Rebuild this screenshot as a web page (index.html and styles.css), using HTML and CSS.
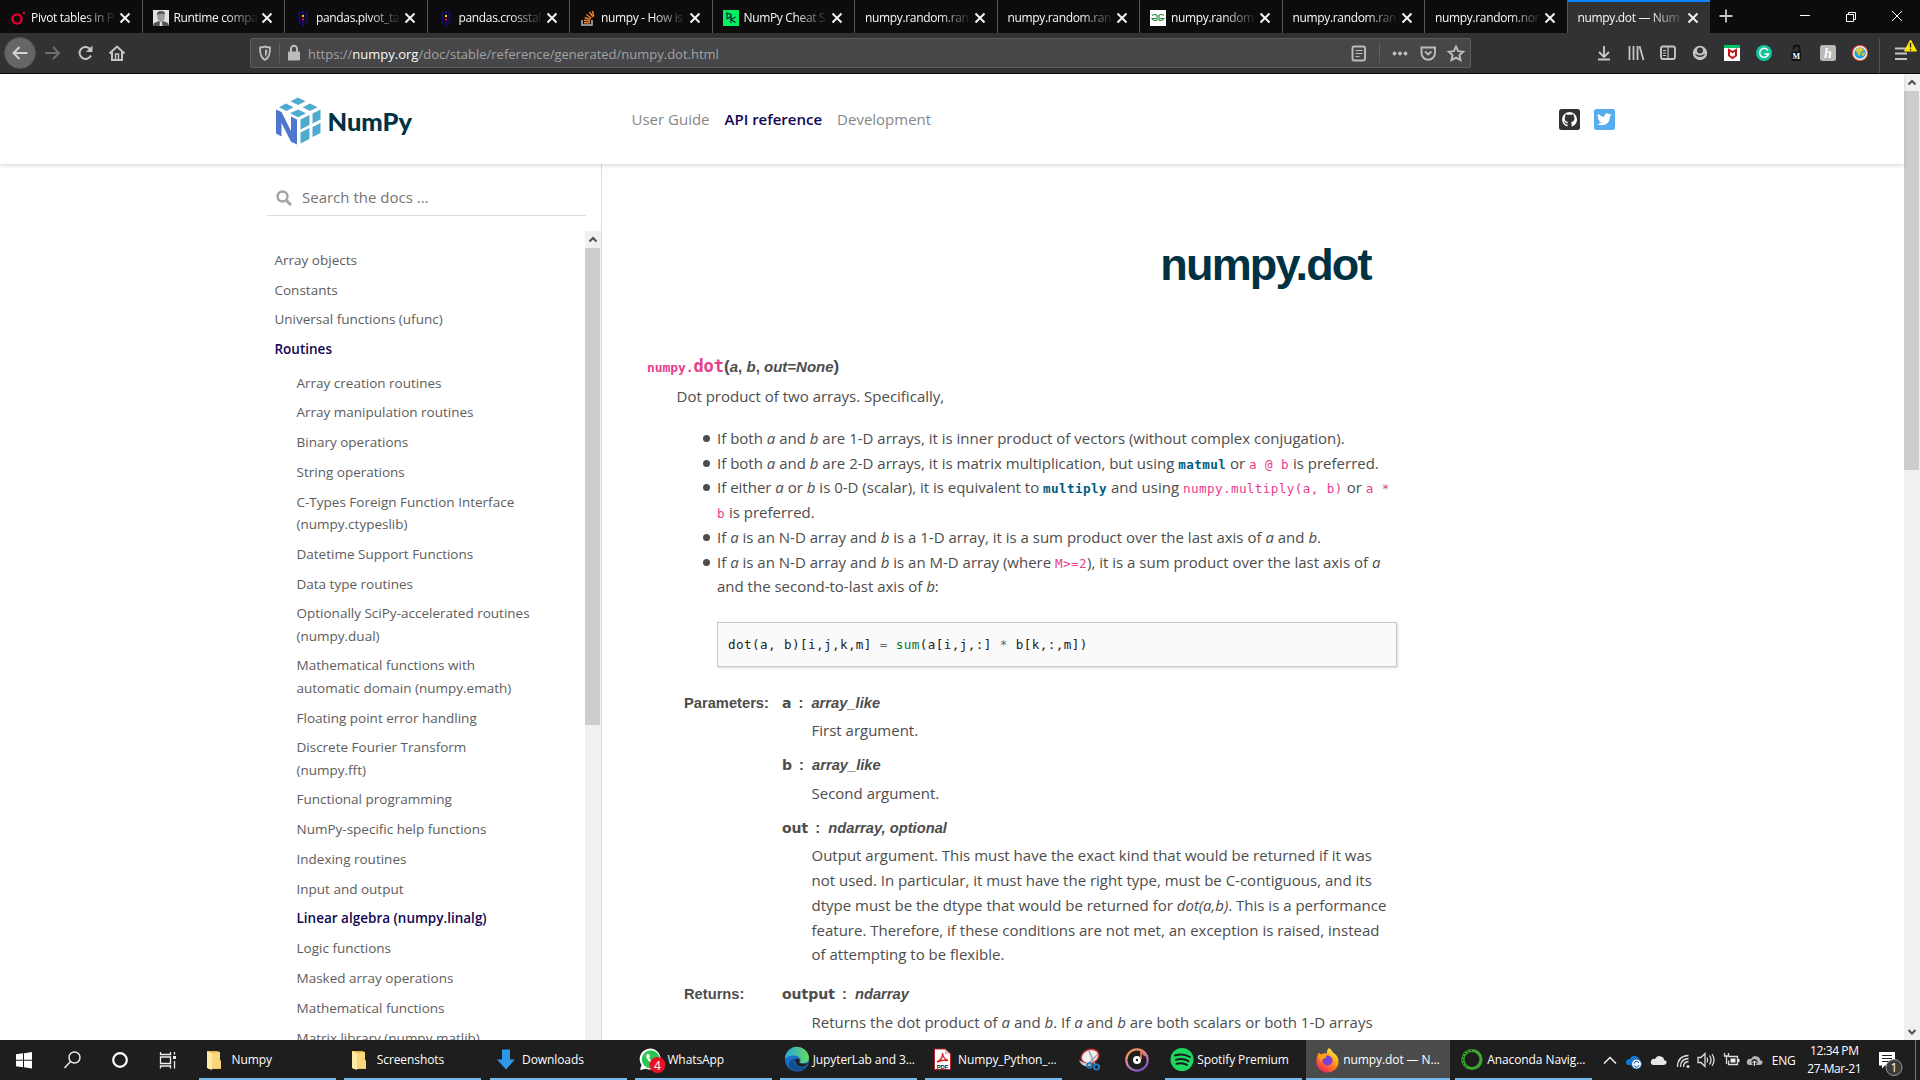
FILE: index.html
```html
<!DOCTYPE html>
<html lang="en">
<head>
<meta charset="utf-8">
<title>numpy.dot — NumPy Manual</title>
<link rel="stylesheet" href="styles.css">
</head>
<body>
<svg class="defs" aria-hidden="true">
  <symbol id="x" viewBox="0 0 12 12"><path d="M1.500 1.500l9 9m0-9l-9 9" fill="none" stroke="#f4f4f5" stroke-width="2"/></symbol>
  <symbol id="pandas" viewBox="0 0 16 16"><path d="M4.500 2v12M11.500 1v12M8 1v3.500M8 11.500V16" stroke="#1c0a6b" stroke-width="2"/><path d="M7 5h2v2H7z" fill="#ffca00"/><path d="M7 8.500h2v2H7z" fill="#e70488"/></symbol>
  <symbol id="folder" viewBox="0 0 16 20"><path d="M1 1h10l3 1v8l1 1v8H2z" fill="#e8b84a"/><path d="M1 1l5 2v17l-5-2z" fill="#ffe9a6"/><path d="M6 3l8-1v8l1 1v7l-9 1z" fill="#f9d679"/></symbol>
</svg>
<div class="screen">
  <div class="tabs">
    <div class="tab"><svg class="fav" viewBox="0 0 16 16"><circle cx="7" cy="9" r="4.600" fill="none" stroke="#e4002b" stroke-width="2.400"/><circle cx="14" cy="3" r="1.300" fill="#e4002b"/></svg><span class="tt">Pivot tables in P</span><svg class="x"><use href="#x"/></svg></div>
    <div class="tab"><svg class="fav" viewBox="0 0 16 16"><path fill="#e2e2e2" d="M0 0h16v16H0z"/><path d="M4 5q0-4 4-4t4 4l-.5 4L8 13 4.500 9z" fill="#9b9b9b"/><path d="M4 5q0-4 4-4t4 3q-4-1-8 1z" fill="#555"/><path d="M0 16l1-3 5-2 2 2 2-2 5 2 1 3z" fill="#555"/><path d="M7 12h2l.5 4h-3z" fill="#ddd"/></svg><span class="tt">Runtime compa</span><svg class="x"><use href="#x"/></svg></div>
    <div class="tab"><svg class="fav"><use href="#pandas"/></svg><span class="tt">pandas.pivot_ta</span><svg class="x"><use href="#x"/></svg></div>
    <div class="tab"><svg class="fav"><use href="#pandas"/></svg><span class="tt">pandas.crosstal</span><svg class="x"><use href="#x"/></svg></div>
    <div class="tab"><svg class="fav" viewBox="0 0 16 16"><path d="M2 10v5h10v-5" fill="none" stroke="#bcbbbb" stroke-width="1.500"/><path d="M4 12.700h6M4 10.200l6 .8M4.700 7.500l5.700 2M6.400 4.500l5 3.700M9.500 2l3.500 5M12.500.8l1.200 5.500" stroke="#f48024" stroke-width="1.400"/></svg><span class="tt">numpy - How is</span><svg class="x"><use href="#x"/></svg></div>
    <div class="tab"><svg class="fav" viewBox="0 0 16 16"><path fill="#03ef62" d="M0 0h16v16H0z"/><path d="M4 9V3l4 1.500v2L4 9M8 6.500V13M12.500 7L8 9.500l4.500 3" fill="none" stroke="#05192d" stroke-width="1.100"/></svg><span class="tt">NumPy Cheat S</span><svg class="x"><use href="#x"/></svg></div>
    <div class="tab"><span class="tt">numpy.random.ran</span><svg class="x"><use href="#x"/></svg></div>
    <div class="tab"><span class="tt">numpy.random.ran</span><svg class="x"><use href="#x"/></svg></div>
    <div class="tab"><svg class="fav" viewBox="0 0 16 16"><path fill="#fff" d="M0 0h16v16H0z"/><path d="M2 5.500q3-2 5 0v4.500q-3 1.500-5-1.500h4M14 5.500q-3-2-5 0v4.500q3 1.500 5-1.500h-4" fill="none" stroke="#2f8d46" stroke-width="1.200"/></svg><span class="tt">numpy.random</span><svg class="x"><use href="#x"/></svg></div>
    <div class="tab"><span class="tt">numpy.random.ran</span><svg class="x"><use href="#x"/></svg></div>
    <div class="tab"><span class="tt">numpy.random.nor</span><svg class="x"><use href="#x"/></svg></div>
    <div class="tab active"><span class="tt">numpy.dot — Num</span><svg class="x"><use href="#x"/></svg></div>
    <svg class="winbtns" viewBox="0 0 211 33"><path d="M10.500 16h13M17 9.500v13" stroke="#c8c8ca" stroke-width="1.800"/><path d="M91 15.500h10" stroke="#fff"/><path d="M137.500 14.500h7v7h-7zM139.500 14.500v-2h7v7h-2" fill="none" stroke="#fff"/><path d="M183 11l10 10m0-10l-10 10" stroke="#fff"/></svg>
  </div>
  <div class="toolbar">
    <svg class="navbtns" viewBox="0 0 250 40"><circle cx="20" cy="20" r="15.500" fill="#666668" stroke="#515153"/><path d="M27.500 20h-14m6-6l-6 6 6 6" fill="none" stroke="#d2d2d3" stroke-width="2"/><path d="M45 20h14m-6-6l6 6-6 6" fill="none" stroke="#6f6f71" stroke-width="2"/><path d="M90.500 16.500a6 6 0 1 0 .5 6" fill="none" stroke="#c4c4c5" stroke-width="2"/><path d="M92.500 12.500v6.500H86z" fill="#c4c4c5"/><path d="M109.500 20.500l7.500-7 7.500 7M112 19v8h10v-8" fill="none" stroke="#c4c4c5" stroke-width="2"/><path d="M115.500 27v-6h3v6" fill="none" stroke="#c4c4c5" stroke-width="1.500"/></svg>
    <div class="url">
      <svg class="shield" viewBox="0 0 50 28"><path d="M9 8.500q4.500-.5 5-1 .5.500 5 1c.2 6-.5 10-5 12.500-4.500-2.500-5.200-6.500-5-12.500z" fill="none" stroke="#bcbcbd" stroke-width="1.800"/><path d="M14 10.500v7.500c1.800-1.500 2.300-4 2.300-7z" fill="#bcbcbd"/><path d="M28.500 4v20" stroke="#5f5f61"/><rect x="37" y="12.500" width="12" height="9" rx="1" fill="#bcbcbd"/><path d="M40 13v-3a3 3.200 0 0 1 6 0v3" fill="none" stroke="#bcbcbd" stroke-width="2"/></svg>
      <span class="addr">https://<b>numpy.org</b>/doc/stable/reference/generated/numpy.dot.html</span>
      <svg class="urlicons" viewBox="0 0 122 28"><g fill="none" stroke="#bcbcbd" stroke-width="1.900"><rect x="4.500" y="7.500" width="12.500" height="14" rx="1.500"/><path d="M7.500 11.500h7M7.500 14.500h7M7.500 17.500h4" stroke-width="1.200"/><path d="M73.500 8.500h13.500v5.500a6.700 6.700 0 0 1-13.500 0z"/><path d="M77 12.500l3.200 3 3.200-3"/><path d="M108 7.500l2.200 4.600 5 .6-3.700 3.500 1 5-4.500-2.500-4.500 2.500 1-5-3.700-3.500 5-.6z"/></g><path d="M31.500 4v20" stroke="#5f5f61"/><circle cx="46.500" cy="14.500" r="1.900" fill="#bcbcbd"/><circle cx="52" cy="14.500" r="1.900" fill="#bcbcbd"/><circle cx="57.500" cy="14.500" r="1.900" fill="#bcbcbd"/></svg>
    </div>
    <svg class="exts" viewBox="0 0 340 40"><g fill="none" stroke="#c4c4c5" stroke-width="1.900"><path d="M24 13v11m-5-5l5 5 5-5M18 26.500h12"/><path d="M49.500 13v14M53.500 13v14M57.500 13v14M59.500 13l4 14" stroke-width="1.800"/><rect x="81" y="13.500" width="14" height="12.500" rx="2"/><path d="M88 14v12M83 17.500h3M83 20h3M83 22.500h3" stroke-width="1.200"/></g>
      <circle cx="120" cy="20" r="7.200" fill="#c4c4c5"/><circle cx="120" cy="17.500" r="3" fill="#38383a"/><path d="M115 20.500q5 4 10 0-1 3.500-5 3.500t-5-3.500z" fill="#38383a"/>
      <path fill="#fff" d="M144 12h16v16h-16z"/><path fill="#02c66c" d="M144 12h16v3h-16z"/><path d="M149 17v5.500l3.500 2.500 3.500-2.500V17l-3.500 2z" fill="none" stroke="#c01818" stroke-width="2"/>
      <circle cx="184" cy="20" r="8" fill="#15c39a"/><path d="M188 17.500a4.500 4.500 0 1 0 .5 3.500h-4" fill="none" stroke="#fff" stroke-width="1.500"/>
      <path d="M213.500 16.500v-1.500q0-2.500 3-2.500t3 2.500v4" fill="none" stroke="#111" stroke-width="1.800"/><path fill="#101010" d="M211.500 18.500h9.500V28h-9.500z"/><text x="216.200" y="26.200" class="mk">M</text>
      <rect x="240" y="12" width="16" height="16" rx="2.500" fill="#b9b9ba"/><text x="248" y="25" class="honey">h</text>
      <circle cx="280" cy="20" r="8" fill="#f05a38"/><circle cx="280" cy="20" r="7" fill="#fff"/><circle cx="280" cy="20" r="5.800" fill="#1fa3dc"/><path d="M275 18q2-4 6-3.500l3 2.500-3 2-1 4-2-1-1-3zM282 20l3-1-1 3.500-2 1z" fill="#d8c83d"/>
      <path d="M299.500 6v34" stroke="#55555a"/><path d="M315 15.500h12M315 20.500h12M315 26h12" stroke="#c4c4c5" stroke-width="2"/><path d="M330.500 7l6 11h-12z" fill="#ffe900" stroke="#ffe900" stroke-linejoin="round"/><path d="M330.500 10v4.500m0 1.500v1.500" stroke="#222" stroke-width="1.300"/></svg>
  </div>

  <div class="page">
    <div class="view">
      <header class="head">
        <svg class="logo" viewBox="0 0 140 50"><g fill="#4dabcf"><path d="M23 1.500l7.500 3.700L23 9l-7.500-3.800zM11 7.500l7.500 3.700-7 3.800L4 11.200zM35 7.500l7.500 3.700-7.500 3.800-7.300-3.800zM23 13.500l8 3.800-8 4-8-4z"/><path d="M25.500 23.500l9-4.500v10l-9 4.500zM37.500 17.500l8-4v10l-8 4zM25.500 36.500l9-4.500v11l-9 4.500zM37.500 31l8-4v10l-8 4z"/></g><path d="M1 13.500l5.500 2.600 9.500 19V20.500l6 3v25l-6-2.700L6.500 27v13.500L1 37.500z" fill="#4d77cf"/><text x="52.500" y="34.800" class="brand" textLength="84.500" lengthAdjust="spacingAndGlyphs">NumPy</text></svg>
        <nav><a>User Guide</a><a class="on">API reference</a><a>Development</a></nav>
        <svg class="social" viewBox="0 0 56 22"><rect width="21" height="21" rx="2.500" fill="#333"/><path d="M10.500 3a7.500 7.500 0 0 0-2.600 14.500c.5.100.6-.2.600-.5v-1.700c-2 .4-2.700-.8-2.900-1.500-.2-.4-.6-.9-1-1.100.8-.5 1.400.3 1.800.9.600.9 1.500.8 2.200.5.100-.5.300-.9.600-1.100-1.900-.2-3.500-.9-3.500-3.700 0-.9.300-1.600.8-2.100-.1-.4-.3-1.100.1-2 1 0 1.700.5 2.200.8 1.100-.3 2.500-.3 3.600 0 .5-.3 1.200-.8 2.200-.8.400.9.200 1.600.1 2 .5.500.8 1.200.8 2.100 0 2.800-1.700 3.500-3.500 3.700.4.300.6.800.6 1.600V17c0 .3.200.6.600.5A7.500 7.500 0 0 0 10.500 3z" fill="#fff"/><rect x="35" width="21" height="21" rx="2.500" fill="#55acee"/><path d="M52.500 5.500l-1.700.5q1-.6 1.300-1.500l-1.800.7a3 3 0 0 0-5 2.700q-3.700-.2-6.300-3.100-1.200 2.500 1 4.200l-1.400-.4q.1 2.400 2.400 3h-1.300q.8 2 2.800 2-1.900 1.500-4.500 1.300c5.500 3.300 13 .8 13-7.600q1-.8 1.500-1.800z" fill="#fff"/></svg>
      </header>
      <div class="cols">
        <aside>
          <div class="search"><svg viewBox="0 0 16 16"><circle cx="6.500" cy="6.500" r="5" fill="none" stroke="#a5a5a5" stroke-width="2.400"/><path d="M10 10l5 5" stroke="#a5a5a5" stroke-width="3"/></svg><span>Search the docs ...</span></div>
          <div class="sidescroll">
            <ul class="menu">
              <li>Array objects</li><li>Constants</li><li>Universal functions (ufunc)</li><li class="on">Routines</li>
            </ul>
            <ul class="menu sub">
              <li>Array creation routines</li><li>Array manipulation routines</li><li>Binary operations</li><li>String operations</li><li>C-Types Foreign Function Interface<br>(numpy.ctypeslib)</li><li>Datetime Support Functions</li><li>Data type routines</li><li>Optionally SciPy-accelerated routines<br>(numpy.dual)</li><li>Mathematical functions with<br>automatic domain (numpy.emath)</li><li>Floating point error handling</li><li>Discrete Fourier Transform<br>(numpy.fft)</li><li>Functional programming</li><li>NumPy-specific help functions</li><li>Indexing routines</li><li>Input and output</li><li class="on">Linear algebra (numpy.linalg)</li><li>Logic functions</li><li>Masked array operations</li><li>Mathematical functions</li><li>Matrix library (numpy.matlib)</li>
            </ul>
            <div class="bar side"><svg viewBox="0 0 16 17"><path d="M4.500 10.500L8 7l3.500 3.500" fill="none" stroke="#505050" stroke-width="2"/></svg><i></i></div>
          </div>
        </aside>
        <main>
          <h1>numpy.dot</h1>
          <div class="sig"><code>numpy.</code><code class="fn">dot</code><b class="par">(</b><em>a</em>, <em>b</em>, <em>out=None</em><b class="par">)</b></div>
          <p class="lead">Dot product of two arrays. Specifically,</p>
          <ul class="pts">
            <li>If both <i>a</i> and <i>b</i> are 1-D arrays, it is inner product of vectors (without complex conjugation).</li>
            <li>If both <i>a</i> and <i>b</i> are 2-D arrays, it is matrix multiplication, but using <code class="ref">matmul</code> or <code>a @ b</code> is preferred.</li>
            <li>If either <i>a</i> or <i>b</i> is 0-D (scalar), it is equivalent to <code class="ref">multiply</code> and using <code>numpy.multiply(a, b)</code> or <code>a *<br>b</code> is preferred.</li>
            <li>If <i>a</i> is an N-D array and <i>b</i> is a 1-D array, it is a sum product over the last axis of <i>a</i> and <i>b</i>.</li>
            <li>If <i>a</i> is an N-D array and <i>b</i> is an M-D array (where <code>M&gt;=2</code>), it is a sum product over the last axis of <i>a</i><br>and the second-to-last axis of <i>b</i>:</li>
          </ul>
          <pre>dot(a, b)[i,j,k,m] <s>=</s> <u>sum</u>(a[i,j,:] <s>*</s> b[k,:,m])</pre>
          <dl class="fields">
            <dt>Parameters:</dt>
            <dd>
              <div class="arg"><b>a</b><span>:</span><em>array_like</em></div><p>First argument.</p>
              <div class="arg"><b>b</b><span>:</span><em>array_like</em></div><p>Second argument.</p>
              <div class="arg"><b>out</b><span>:</span><em>ndarray, optional</em></div>
              <p>Output argument. This must have the exact kind that would be returned if it was<br>not used. In particular, it must have the right type, must be C-contiguous, and its<br>dtype must be the dtype that would be returned for <i>dot(a,b)</i>. This is a performance<br>feature. Therefore, if these conditions are not met, an exception is raised, instead<br>of attempting to be flexible.</p>
            </dd>
            <dt>Returns:</dt>
            <dd><div class="arg"><b>output</b><span>:</span><em>ndarray</em></div><p>Returns the dot product of <i>a</i> and <i>b</i>. If <i>a</i> and <i>b</i> are both scalars or both 1-D arrays</p></dd>
          </dl>
        </main>
      </div>
    </div>
    <div class="bar main"><svg viewBox="0 0 16 17"><path d="M4.500 10.500L8 7l3.500 3.500" fill="none" stroke="#505050" stroke-width="2"/></svg><i></i><svg class="down" viewBox="0 0 16 17"><path d="M4.500 7L8 10.500 11.500 7" fill="none" stroke="#505050" stroke-width="2"/></svg></div>
  </div>

  <div class="taskbar">
    <svg class="sys" viewBox="0 0 199 40"><path d="M16 14.300l7-1v6.500h-7zM24 13.200l8-1.200v7.800h-8zM16 20.700h7v6.500l-7-1zM24 20.700h8v7.800l-8-1.200z" fill="#fff"/><circle cx="74.500" cy="17.500" r="5.500" fill="none" stroke="#eee" stroke-width="1.400"/><path d="M70.500 21.500L64.500 28" stroke="#eee" stroke-width="1.400"/><circle cx="120" cy="20" r="6.800" fill="none" stroke="#fff" stroke-width="2.200"/><path d="M160.500 12v2.500h10V12M160.500 28.500V26h10v2.500M160.500 17h10v6.500h-10zM174.500 12v2.500m0 6.500v7.500" fill="none" stroke="#eee" stroke-width="1.300"/><path d="M173 16h3v3h-3z" fill="#eee"/></svg>
    <div class="app"><svg><use href="#folder" x="7" y="10" width="16" height="20"/></svg><span>Numpy</span></div>
    <div class="app"><svg><use href="#folder" x="7" y="10" width="16" height="20"/></svg><span>Screenshots</span></div>
    <div class="app"><svg viewBox="0 0 32 40"><path d="M12 9.500h8v10h5L16 29.500 7 19.500h5z" fill="#2f97e8"/></svg><span>Downloads</span></div>
    <div class="app"><svg viewBox="0 0 32 40"><path d="M5 30l1.500-5a10.500 10.500 0 1 1 4.500 3.700z" fill="#fff"/><circle cx="15.800" cy="19.300" r="9" fill="#2bc754"/><path d="M12 14c-3 3 3.500 11 8 9.500l1-2.500-2.500-1.500-1.500 1.200q-2-1-3-3l1-1.200-1-2.500z" fill="#fff"/><circle cx="22.500" cy="25" r="8" fill="#e81224"/><text x="22.500" y="29.500" class="badge">4</text></svg><span>WhatsApp</span></div>
    <div class="app"><svg viewBox="0 0 32 40"><defs><linearGradient id="e1" x1="0" x2="1"><stop stop-color="#2aa7e0"/><stop offset="1" stop-color="#65d95c"/></linearGradient></defs><circle cx="17" cy="19.500" r="12" fill="#1b70c8"/><path d="M5 19.500a12 12 0 0 1 24-1.500c.2 5-6 6.500-9.500 4.500 3-3-.5-7-5-7Q7 15.500 5 19.500z" fill="url(#e1)"/><path d="M15 19c-2 6 3.500 9 11.500 7-5 6-14 7-18 0 0-4 2.500-7 6.500-7z" fill="#154d91"/><path d="M15 19.500q3-2 4.500.5.500 1-.5 2.500 3 2.200 9 .5-1.500 3-4 3.300-8 1-9-6.800z" fill="#1e1e1e"/></svg><span>JupyterLab and 3...</span></div>
    <div class="app"><svg viewBox="0 0 32 40"><path d="M9.500 9H20l5.500 5v15.500h-16z" fill="#fff" stroke="#b8202a"/><path d="M20 9l5.500 5H20z" fill="#f2b4b4"/><path d="M12 22q6-3 5.500-9 .8 6 5.500 7.500-6-1-11 1.500z" fill="none" stroke="#dd2025" stroke-width="1.400"/><text x="17.500" y="28.500" class="pdf">PDF</text></svg><span>Numpy_Python_...</span></div>
    <svg class="mid" viewBox="0 0 94 40"><ellipse cx="19" cy="16.500" rx="9" ry="7" transform="rotate(-20 19 16.500)" fill="#eef0f3" stroke="#c93030" stroke-width="1.500"/><path d="M8 20q3 8 11 6l3-2q-9 0-14-4z" fill="#c8ccd2"/><path d="M18 11l6 14M27 14l-10 10" stroke="#9aa3ad" stroke-width="1.500"/><circle cx="25.500" cy="27" r="2.600" fill="none" stroke="#1e7fc2" stroke-width="1.800"/><circle cx="18.500" cy="25.500" r="2.300" fill="none" stroke="#1e7fc2" stroke-width="1.800"/><defs><linearGradient id="g1" x1="0" y1="0" x2=".6" y2="1"><stop stop-color="#f5963a"/><stop offset=".5" stop-color="#dc87a0"/><stop offset="1" stop-color="#8257c2"/></linearGradient></defs><circle cx="66" cy="20" r="10.700" fill="none" stroke="url(#g1)" stroke-width="2.200"/><circle cx="66" cy="20" r="4" fill="#fff"/><circle cx="66" cy="20" r="1.200" fill="#222"/><path d="M70 19v-8l4 5" fill="none" stroke="#e8775a" stroke-width="1.700"/></svg>
    <div class="app spot"><svg viewBox="0 0 32 40"><circle cx="17" cy="19.500" r="11.500" fill="#1ed760"/><path d="M10 15.500q8-2.500 15 1.500M11 19.800q7-2 12.500 1.300M11.500 23.700q6-1.500 10.500 1.200" fill="none" stroke="#1b1b1b" stroke-width="2" stroke-linecap="round"/></svg><span>Spotify Premium</span></div>
    <div class="app cur"><svg viewBox="0 0 32 40"><defs><linearGradient id="f1" x1=".8" y1="0" x2=".2" y2="1"><stop stop-color="#fff04a"/><stop offset=".45" stop-color="#ff980e"/><stop offset="1" stop-color="#f0195f"/></linearGradient></defs><path d="M18 8q3 2 4 4.500 6 4 5.500 9.500a11 10.500 0 0 1-22 0Q5 16.500 8 12.500l2 2q3-2 6-1-.5-3.500 2-5.500z" fill="url(#f1)"/><circle cx="16.500" cy="20.500" r="5" fill="#7a3fe0"/><path d="M8 14q4 1 7 2.500 1.500 1-1.500 2-3 0-2.500 3-4-1-3-7.500z" fill="#ff9f16"/></svg><span>numpy.dot — N...</span></div>
    <div class="app ana"><svg viewBox="0 0 32 40"><circle cx="17" cy="19.500" r="9" fill="none" stroke="#3aa62c" stroke-width="3.200"/><path d="M17 10.300a9.200 9.200 0 0 0-6 16.200" fill="none" stroke="#1e1e1e" stroke-width="1.200" stroke-dasharray="1.500 2"/></svg><span>Anaconda Navig...</span></div>
    <svg class="tray" viewBox="0 0 177 40"><path d="M13 23.500l6-6 6 6" fill="none" stroke="#eee" stroke-width="1.500"/><path d="M37 25q-2.500-.5-2-3.500t4-2.500q2-4 6-3 3 1 3.500 4l2 5z" fill="#0f78d4"/><circle cx="45.500" cy="24" r="5" fill="#eef3fa" stroke="#1862a8"/><path d="M43 23.500a2.600 2.600 0 0 1 5-.5m0 2a2.600 2.600 0 0 1-5 .3" fill="none" stroke="#1862a8"/><path d="M62 25q-3-1-2-4t4-2q2-4 6-2.500 3 .5 3 3.500 3 .5 2.500 3-.5 2-3 2z" fill="#e6e6e6"/><g fill="none" stroke="#ddd" stroke-width="1.300"><path d="M86.500 27q0-11 11-11.500M89.500 27q0-8 8-8.500M92.500 27q0-5 5-5.500"/><path d="M107 17.500h3l4-4v13l-4-4h-3zM116 17.500q1.500 2.500 0 5M118.500 15.500q3 4.500 0 9M121 14q4 6 0 12"/><path d="M137.500 16.500h9v8h-9v-4"/><path d="M133.500 13v3h4v-3m-2 3v8"/></g><path d="M139.500 18.500h5v4h-5zM147 19h1.500v3H147z" fill="#eee"/><circle cx="97" cy="26.500" r="1.500" fill="#ddd"/><path d="M158 25q-3-1-2-4t4-2q2-4 6-2.500 3 .5 3 3.500 3 .5 2.500 3-.5 2-3 2z" fill="#b5b5b5"/><circle cx="163.500" cy="22" r="3" fill="#333"/><path d="M163.500 26v-5m-2 2l2-2 2 2" stroke="#eee" fill="none"/></svg>
    <span class="lang">ENG</span>
    <div class="clock"><span>12:34 PM</span><span>27-Mar-21</span></div>
    <svg class="note" viewBox="0 0 51 40"><path d="M10 12h16v13.500H16l-3 3v-3h-3z" fill="#fff"/><path d="M13 15.500h10M13 18.500h10M13 21.500h7" stroke="#222"/><circle cx="25" cy="27.500" r="8" fill="#3c3c3c" stroke="#999"/><text x="25" y="32" class="n1">1</text><path d="M46.500 0v40" stroke="#777"/></svg>
  </div>
</div>
</body>
</html>
```
FILE: styles.css
```css
* { box-sizing: border-box; }
body { margin: 0; background: #fff; font-family: "Open Sans", sans-serif; font-size: 15px; line-height: 24.75px; color: #4d4d4d; overflow: hidden; }
ul, dl, dd, p, h1, pre { margin: 0; padding: 0; }
svg { display: block; flex: none; }
.defs { position: absolute; width: 0; height: 0; }
.screen { width: 1920px; height: 1080px; display: flex; flex-direction: column; overflow: hidden; }

.tabs { height: 33px; flex: none; display: flex; background: #0c0c0d; }
.tab { width: 142.5px; flex: none; border-right: 1px solid #55555a; display: flex; align-items: center; padding: 2px 11px 0 10px; color: #f9f9fa; font-size: 12px; letter-spacing: -0.34px; }
.tab .fav { width: 16px; height: 16px; margin-right: 5px; }
.tab .tt { flex: 1; min-width: 0; white-space: nowrap; margin-right: 2px; line-height: 20px; mask-image: linear-gradient(to right, #000 calc(100% - 34px), transparent); }
.tab .x { width: 12px; height: 12px; }
.tab.active { background: #323234; border-right: 0; border-top: 2px solid #0a84ff; padding-top: 0; }
.winbtns { width: 211px; height: 33px; margin-left: -1px; }

.toolbar { height: 41px; flex: none; background: #323234; border-bottom: 1px solid #0c0c0d; display: flex; }
.navbtns { width: 250px; height: 40px; }
.url { width: 1221px; height: 30px; margin-top: 5px; background: #474749; border: 1px solid #5c5c5e; border-radius: 2px; display: flex; align-items: center; }
.shield { width: 50px; height: 28px; }
.addr { flex: 1; font-size: 13px; padding: 2px 0 0 7px; color: #a2a2a3; }
.addr b { font-weight: 400; color: #f9f9fa; }
.urlicons { width: 122px; height: 28px; }
.exts { width: 340px; height: 40px; margin-left: 109px; }
.mk { font: bold 8px "Liberation Serif", serif; fill: #fff; text-anchor: middle; }
.honey { font: italic bold 14px "Liberation Serif", serif; fill: #fff; text-anchor: middle; }

.page { flex: 1; min-height: 0; display: flex; }
.view { flex: 1; display: flex; flex-direction: column; min-width: 0; }
.head { height: 90px; flex: none; display: flex; align-items: center; padding: 0 0 0 275px; box-shadow: 0 2px 4px rgba(0,0,0,.13); z-index: 1; }
.logo { width: 140px; height: 50px; margin-top: 4px; }
.brand { font: 900 25px Lato, sans-serif; fill: #013243; }
.head nav { display: flex; flex: 1; gap: 15px; padding-left: 216.5px; color: #878787; }
.head .on, .menu .on { color: #130654; font-weight: 600; }
.social { width: 56px; height: 22px; margin: 1px 289px 0 0; }
.cols { flex: 1; min-height: 0; display: flex; }
aside { width: 602px; flex: none; border-right: 1px solid #dcdcdc; padding: 16px 0 0 267px; display: flex; flex-direction: column; }
.search { width: 319px; height: 36px; border-bottom: 1px solid #dedede; display: flex; align-items: center; gap: 10px; padding-left: 9px; color: #757575; flex: none; }
.search svg { width: 16px; height: 16px; }
.sidescroll { flex: 1; min-height: 0; margin-top: 15px; padding: 14px 0 0 7.5px; position: relative; overflow: hidden; }
.menu { list-style: none; font-size: 13.5px; line-height: 22.28px; white-space: nowrap; color: #5d5d5d; }
.menu li { padding: 3.75px 0; }
.sub { padding: 3.75px 0 0 22px; }
.bar { width: 16px; background: #f0f0f0; display: flex; flex-direction: column; }
.bar svg { width: 16px; height: 17px; }
.bar i { background: #cdcdcd; display: block; margin-right: 1px; }
.bar.side { position: absolute; right: 0; top: 0; bottom: 0; }
.side i { height: 477px; }
.main i { height: 379px; }
.bar .down { margin-top: auto; }

main { padding: 73px 0 0 45px; width: 800px; white-space: nowrap; }
h1 { font: bold 45px/56px "Liberation Sans", Arial, sans-serif; letter-spacing: -1.8px; color: #013243; text-align: center; width: 1237px; }
.sig { margin-top: 56px; height: 35px; line-height: 35px; font-weight: 700; font-family: "Liberation Sans", Arial, sans-serif; font-size: 15px; }
code, pre { font: 12.6px "DejaVu Sans Mono", monospace; letter-spacing: .41px; color: #e83e8c; }
.sig code { font-weight: 700; letter-spacing: -.1px; font-size: 13px; }
.sig .fn { font-size: 17px; letter-spacing: 0; }
.par { font-size: 17px; }
.lead { padding-left: 29.5px; }
.pts { padding-left: 70px; margin-top: 17px; list-style: none; }
.pts li::before { content: ""; display: inline-block; width: 7px; height: 7px; border-radius: 50%; background: #4d4d4d; margin: 0 7px 0 -14px; vertical-align: 2px; }
.pts .ref { color: #005b81; font-weight: 700; }
pre { margin: 23px 0 0 70px; width: 680px; height: 45px; padding: 0 10px; line-height: 44px; background: #fafafa; border: 1px solid #c9c9c9; box-shadow: 1px 1px 2px #d8d8d8; color: #222; }
pre s { text-decoration: none; color: #666; }
pre u { text-decoration: none; color: #00782f; }
.fields { display: grid; grid-template-columns: 98px 1fr; padding-left: 37px; margin-top: 23.5px; }
.fields dt, .arg { font: bold 14.7px/24.75px "Liberation Sans", Arial, sans-serif; }
.arg { display: flex; }
.arg b { font: bold 14px/24.75px "DejaVu Sans", sans-serif; }
.arg span { width: 13px; margin-left: 7px; }
.fields dd p { padding-left: 29.5px; margin: 2.5px 0 10.75px; }
.fields dd:nth-of-type(1) { padding-bottom: 4.5px; }

.taskbar { height: 40px; flex: none; background: #1e1e1e; display: flex; color: #fff; font-size: 12px; line-height: 18px; white-space: nowrap; }
.sys { width: 199px; height: 40px; }
.app { width: 137px; margin-right: 8.3px; border-bottom: 2px solid #76b9ed; height: 40px; display: flex; align-items: center; flex: none; letter-spacing: -.1px; }
.app svg { width: 32px; height: 40px; margin-top: 2px; }
.app span { padding: 2px 0 0 .5px; }
.mid { width: 94px; height: 40px; }
.badge { font: 12px "Open Sans", sans-serif; fill: #fff; text-anchor: middle; }
.pdf { font: bold 6px "Liberation Sans", sans-serif; fill: #222; text-anchor: middle; }
.spot { margin-right: 4px; }
.cur { width: 144px; background: #4b4b4b; margin-right: 5px; padding-left: 5px; }
.ana { margin-right: 0; }
.tray { width: 177px; height: 40px; margin-left: -1px; }
.lang { padding: 12px 0 0 4px; width: 33px; letter-spacing: -.3px; }
.clock { width: 67px; display: flex; flex-direction: column; text-align: center; padding-top: 2px; letter-spacing: -.4px; }
.note { width: 51px; height: 40px; margin-left: auto; }
.n1 { font: 12px "Open Sans", sans-serif; fill: #fff; text-anchor: middle; }
```
